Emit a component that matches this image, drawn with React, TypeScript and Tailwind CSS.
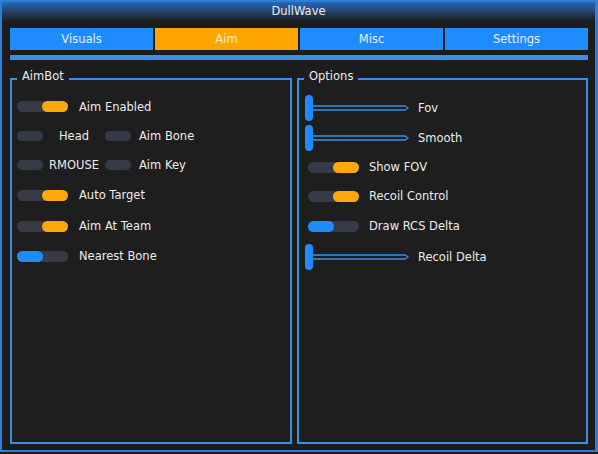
import React from 'react';

const font = { fontFamily: '"DejaVu Sans", Verdana, sans-serif' };

function Toggle({ on, color }: { on: boolean; color: 'orange' | 'blue' }) {
  return (
    <div className="w-[51px] h-[11px] rounded-full bg-[#363b47] flex shrink-0">
      <div
        className={`w-[26px] h-full rounded-full ${color === 'orange' ? 'bg-[#ffa80a]' : 'bg-[#1e8cff]'} ${on ? 'ml-auto' : ''}`}
      />
    </div>
  );
}

function Pill() {
  return <div className="w-[26px] h-[10px] rounded-full bg-[#363b47] shrink-0" />;
}

function Slider({ label }: { label: string }) {
  return (
    <div className="flex items-center h-full">
      <div className="w-[8px] h-[26px] rounded-full bg-[#1e8cff]" />
      <svg width="96" height="6" viewBox="0 0 96 6" className="block">
        <path d="M0 1 H92 L95 3 L92 5 H0" fill="none" stroke="#3b8ee6" strokeWidth="1.3" />
      </svg>
      <span className="ml-[9px] pt-[2px]">{label}</span>
    </div>
  );
}

function GroupBox({ title, className, children }: { title: string; className: string; children: React.ReactNode }) {
  return (
    <div className={`relative h-[366px] border-2 border-[#3b8ee6] bg-[#1e1e1e] ${className}`}>
      <span className="absolute left-[5px] -top-[11px] px-[5px] leading-[14px] bg-[#1e1e1e]">{title}</span>
      {children}
    </div>
  );
}

export default function App() {
  const tabs = ['Visuals', 'Aim', 'Misc', 'Settings'];

  const leftRows = [
    { h: 'h-[29px]', el: <><Toggle on color="orange" /><span className="ml-[11px] pt-[2px]">Aim Enabled</span></> },
    { h: 'h-[29px]', el: <><Pill /><span className="w-[62px] text-center pt-[2px]">Head</span><Pill /><span className="ml-[8px] pt-[2px]">Aim Bone</span></> },
    { h: 'h-[29px]', el: <><Pill /><span className="w-[62px] text-center pt-[2px]">RMOUSE</span><Pill /><span className="ml-[8px] pt-[2px]">Aim Key</span></> },
    { h: 'h-[32px]', el: <><Toggle on color="orange" /><span className="ml-[11px] pt-[2px]">Auto Target</span></> },
    { h: 'h-[30px]', el: <><Toggle on color="orange" /><span className="ml-[11px] pt-[2px]">Aim At Team</span></> },
    { h: 'h-[30px]', el: <><Toggle on={false} color="blue" /><span className="ml-[11px] pt-[2px]">Nearest Bone</span></> },
  ];

  return (
    <div className="w-[598px] h-[454px] bg-[#1a1a1a] text-[11.5px] text-[#ececec]" style={font}>
      <div className="h-[452px] border-2 border-r-[3px] border-[#2e7fd6] bg-[#1c1c1c] flex flex-col">
        {/* Title bar */}
        <div className="h-[20px] bg-linear-to-b from-[#2568bd] to-[#1c1c1c] flex items-center justify-center">
          DullWave
        </div>

        <div className="pl-[8px] pr-[7px] pt-[6px]">
          {/* Tabs */}
          <div className="flex gap-[2px] h-[22px]">
            {tabs.map((t) => (
              <div
                key={t}
                className={`flex-1 flex items-center justify-center pt-[2px] ${t === 'Aim' ? 'bg-[#ffa500] text-[#fff2d0]' : 'bg-[#1e8cff] text-[#e4f0ff]'}`}
              >
                {t}
              </div>
            ))}
          </div>
          <div className="mt-[5px] h-[5px] bg-[#3b8ee6]" />

          {/* Groups */}
          <div className="mt-[18px] flex gap-[5px]">
            <GroupBox title="AimBot" className="w-[282px] pl-[5px] pt-[12px]">
              {leftRows.map((r, i) => (
                <div key={i} className={`${r.h} flex items-center`}>
                  {r.el}
                </div>
              ))}
            </GroupBox>

            <GroupBox title="Options" className="flex-1 pl-[6px] pt-[13px]">
              <div className="h-[30px]"><Slider label="Fov" /></div>
              <div className="h-[30px]"><Slider label="Smooth" /></div>
              <div className="h-[28px] flex items-center ml-[3px]">
                <Toggle on color="orange" /><span className="ml-[10px] pt-[2px]">Show FOV</span>
              </div>
              <div className="h-[30px] flex items-center ml-[3px]">
                <Toggle on color="orange" /><span className="ml-[10px] pt-[2px]">Recoil Control</span>
              </div>
              <div className="h-[30px] flex items-center ml-[3px]">
                <Toggle on={false} color="blue" /><span className="ml-[10px] pt-[2px]">Draw RCS Delta</span>
              </div>
              <div className="h-[32px]"><Slider label="Recoil Delta" /></div>
            </GroupBox>
          </div>
        </div>
      </div>
    </div>
  );
}
